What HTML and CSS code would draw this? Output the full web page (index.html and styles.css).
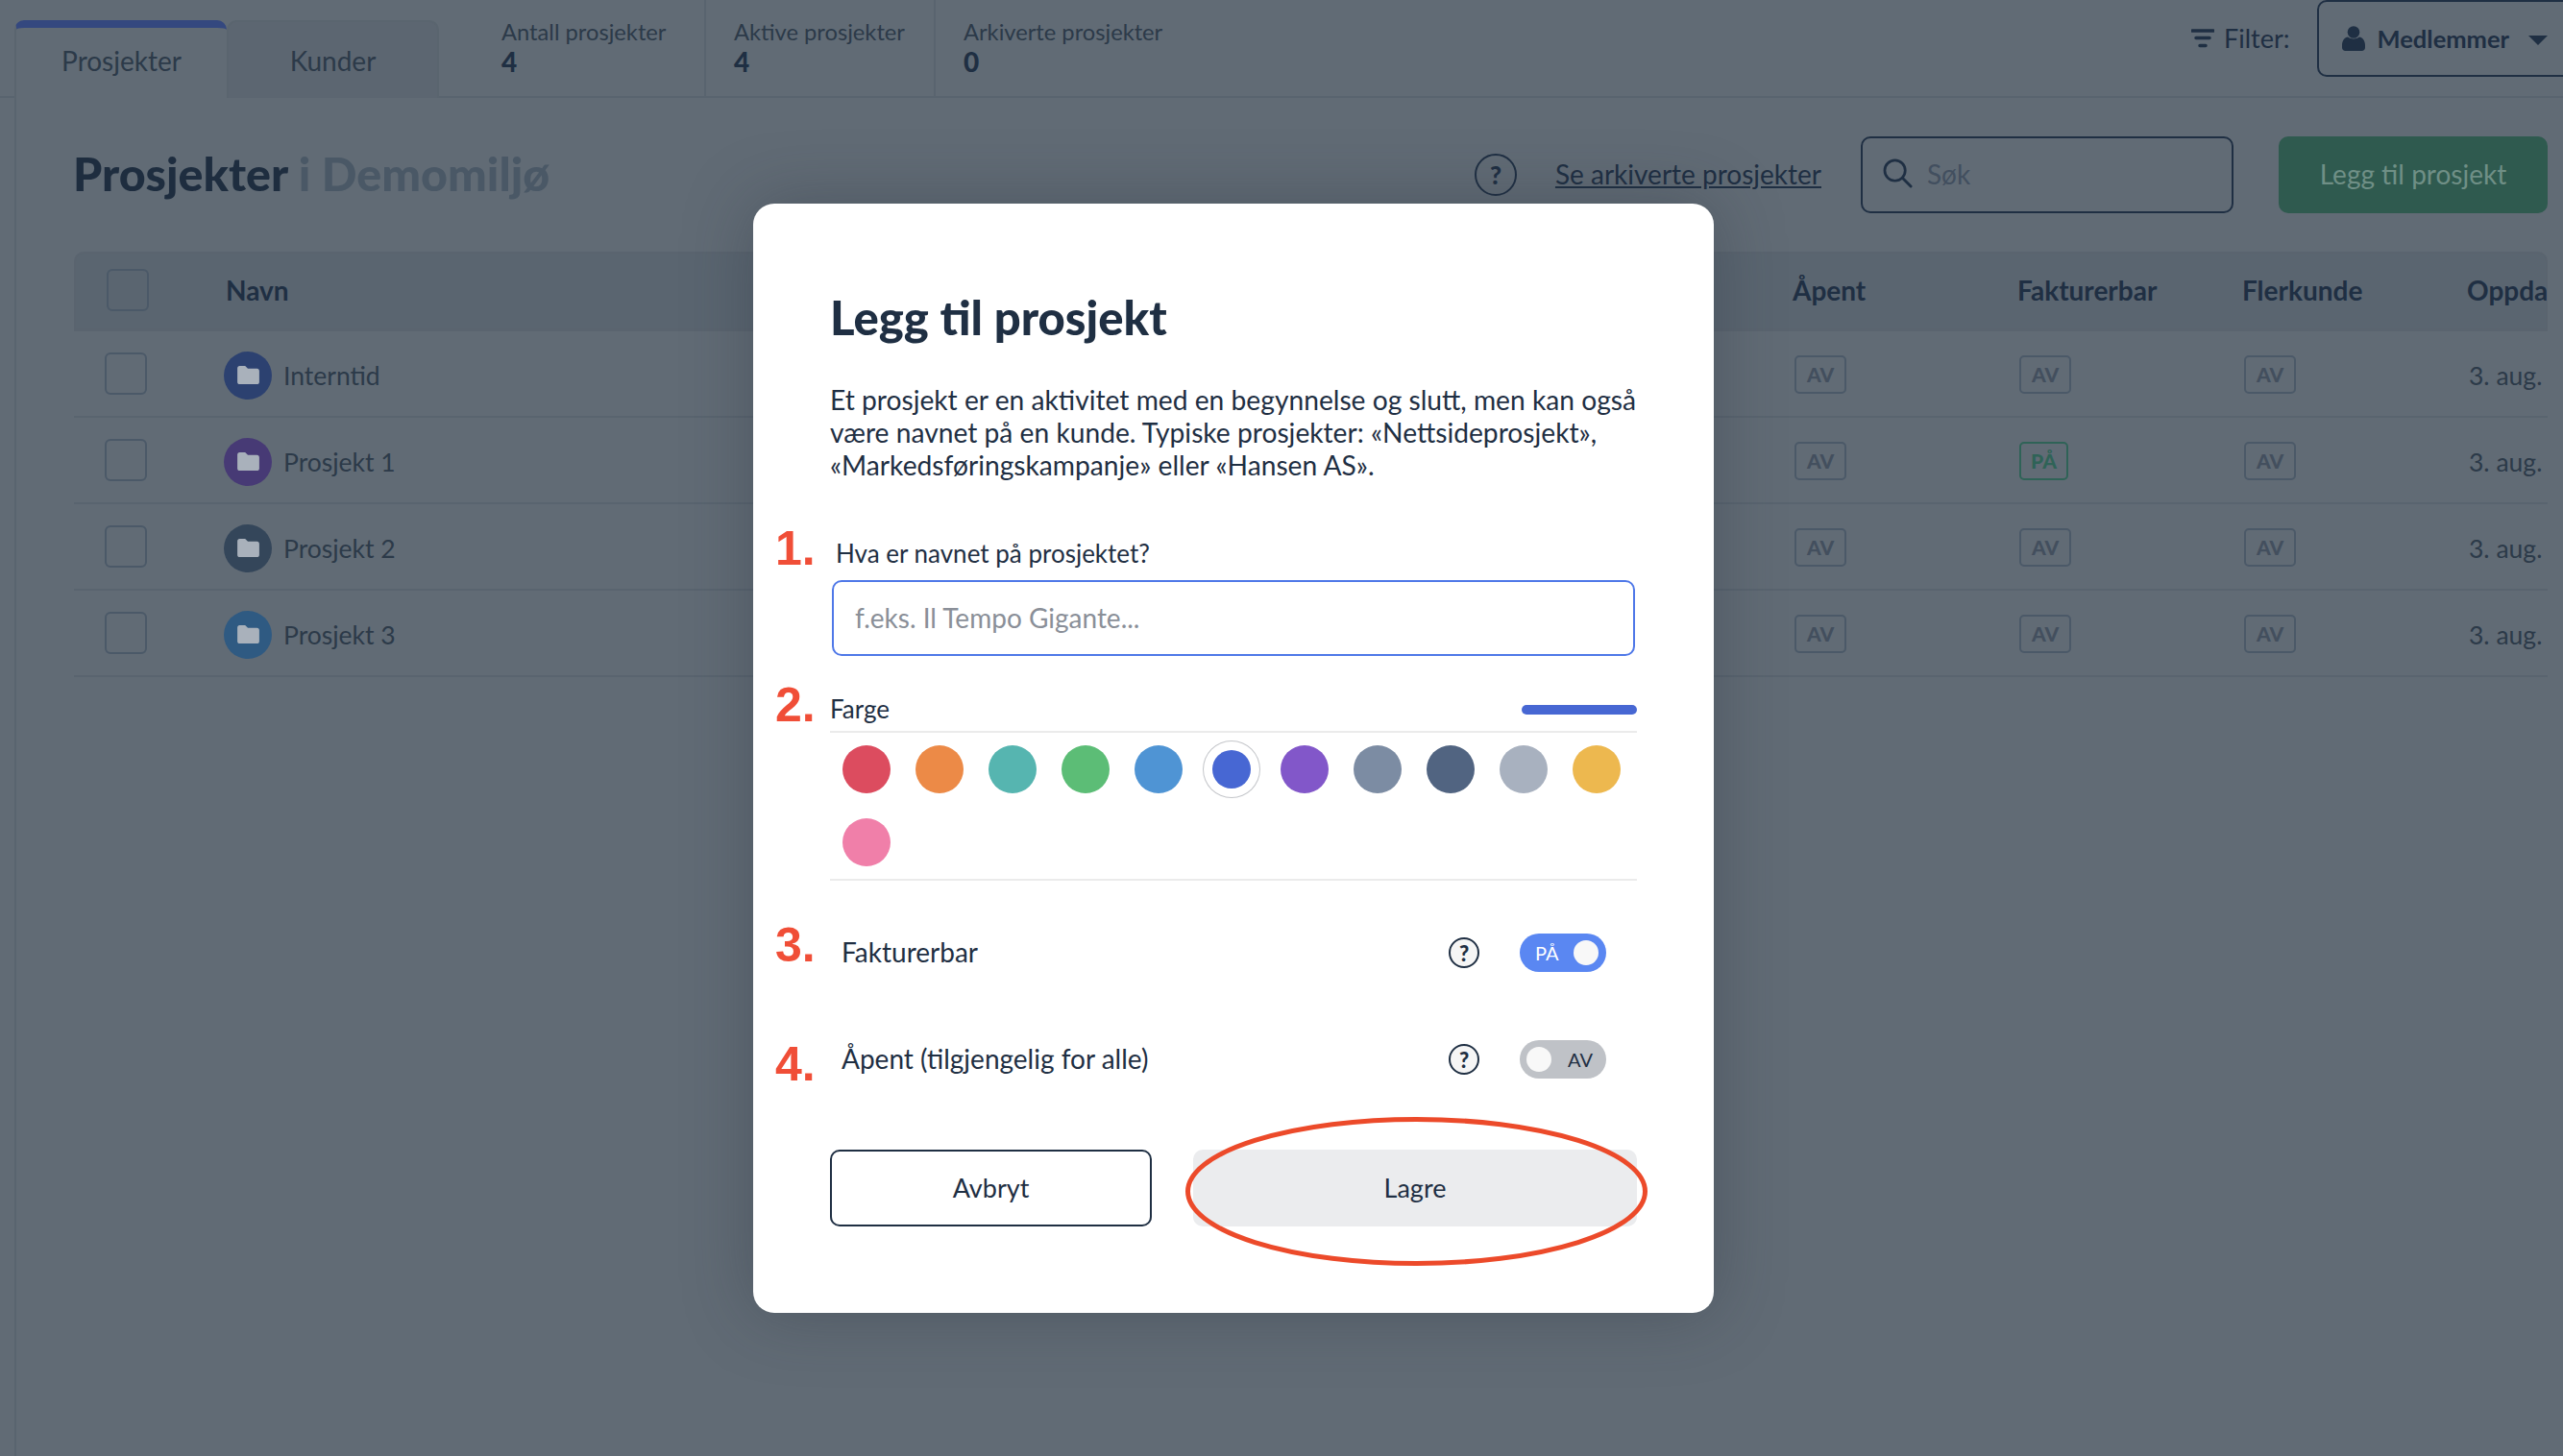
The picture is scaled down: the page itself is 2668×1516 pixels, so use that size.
FILE: index.html
```html
<!DOCTYPE html>
<html lang="no">
<head>
    <meta charset="UTF-8">
    <title>Prosjekter</title>
    <link rel="stylesheet" href="styles.css">
</head>
<body>
    <div class="page">
        <header class="topbar">
            <div class="tabs">
                <div class="tab tab-active">Prosjekter</div>
                <div class="tab">Kunder</div>
            </div>
            <div class="stats">
                <div class="stat"><span>Antall prosjekter</span><b>4</b></div>
                <div class="stat"><span>Aktive prosjekter</span><b>4</b></div>
                <div class="stat stat-last"><span>Arkiverte prosjekter</span><b>0</b></div>
            </div>
            <div class="filter">
                <svg class="filter-icon" viewBox="0 0 24 20"><path d="M1 2h22M5 9.500h14M9 17.500h6" stroke="#1f2f43" stroke-width="3.500" stroke-linecap="round" fill="none"/></svg>
                <span class="filter-label">Filter:</span>
                <div class="dropdown">
                    <svg class="person-icon" viewBox="0 0 24 26"><circle cx="12" cy="6.500" r="6.300" fill="#1f2f43"/><path d="M0 20c0-5 3-8 6-8.500 3 2.500 9 2.500 12 0 3 .5 6 3.500 6 8.500v2.500c0 2-1.500 3.500-3.500 3.500h-17C1.500 26 0 24.500 0 22.500z" fill="#1f2f43"/></svg>
                    <span>Medlemmer</span>
                    <i class="caret"></i>
                </div>
            </div>
        </header>

        <section class="content">
            <div class="head">
                <h1>Prosjekter <span>i Demomiljø</span></h1>
                <span class="help help-big">?</span>
                <a class="archive-link" href="#">Se arkiverte prosjekter</a>
                <div class="search">
                    <svg class="search-icon" viewBox="0 0 32 32"><circle cx="13" cy="13" r="11" stroke="#1f2f43" stroke-width="2.800" fill="none"/><path d="M21 21l9 9" stroke="#1f2f43" stroke-width="3" stroke-linecap="round"/></svg>
                    <span>Søk</span>
                </div>
                <button class="add-btn">Legg til prosjekt</button>
            </div>

            <div class="table">
                <div class="row row-head">
                    <div><i class="check check-head"></i></div>
                    <div>Navn</div>
                    <div>Åpent</div>
                    <div>Fakturerbar</div>
                    <div>Flerkunde</div>
                    <div class="clip">Oppdatert</div>
                </div>
                <div class="row">
                    <div><i class="check"></i></div>
                    <div class="name"><span class="avatar av-blue"><svg viewBox="0 0 24 20"><path d="M0 2.500C0 1 1 0 2.500 0h6l3 3h10C23 3 24 4 24 5.500v12c0 1.500-1 2.500-2.500 2.500h-19C1 20 0 19 0 17.500z"/></svg></span>Interntid</div>
                    <div><span class="badge">AV</span></div>
                    <div><span class="badge">AV</span></div>
                    <div><span class="badge">AV</span></div>
                    <div class="clip">3. aug. 2021</div>
                </div>
                <div class="row">
                    <div><i class="check"></i></div>
                    <div class="name"><span class="avatar av-purple"><svg viewBox="0 0 24 20"><path d="M0 2.500C0 1 1 0 2.500 0h6l3 3h10C23 3 24 4 24 5.500v12c0 1.500-1 2.500-2.500 2.500h-19C1 20 0 19 0 17.500z"/></svg></span>Prosjekt 1</div>
                    <div><span class="badge">AV</span></div>
                    <div><span class="badge badge-on">PÅ</span></div>
                    <div><span class="badge">AV</span></div>
                    <div class="clip">3. aug. 2021</div>
                </div>
                <div class="row">
                    <div><i class="check"></i></div>
                    <div class="name"><span class="avatar av-dark"><svg viewBox="0 0 24 20"><path d="M0 2.500C0 1 1 0 2.500 0h6l3 3h10C23 3 24 4 24 5.500v12c0 1.500-1 2.500-2.500 2.500h-19C1 20 0 19 0 17.500z"/></svg></span>Prosjekt 2</div>
                    <div><span class="badge">AV</span></div>
                    <div><span class="badge">AV</span></div>
                    <div><span class="badge">AV</span></div>
                    <div class="clip">3. aug. 2021</div>
                </div>
                <div class="row">
                    <div><i class="check"></i></div>
                    <div class="name"><span class="avatar av-sky"><svg viewBox="0 0 24 20"><path d="M0 2.500C0 1 1 0 2.500 0h6l3 3h10C23 3 24 4 24 5.500v12c0 1.500-1 2.500-2.500 2.500h-19C1 20 0 19 0 17.500z"/></svg></span>Prosjekt 3</div>
                    <div><span class="badge">AV</span></div>
                    <div><span class="badge">AV</span></div>
                    <div><span class="badge">AV</span></div>
                    <div class="clip">3. aug. 2021</div>
                </div>
            </div>
        </section>
    </div>

    <div class="modal">
        <h2>Legg til prosjekt</h2>
        <p class="intro">Et prosjekt er en aktivitet med en begynnelse og slutt, men kan også være navnet på en kunde. Typiske prosjekter: «Nettsideprosjekt», «Markedsføringskampanje» eller «Hansen AS».</p>

        <label class="name-label" for="projectName">Hva er navnet på prosjektet?</label>
        <input class="name-input" id="projectName" placeholder="f.eks. Il Tempo Gigante...">

        <div class="color-head">
            <span>Farge</span>
            <i class="color-bar"></i>
        </div>
        <div class="swatches">
            <i class="swatch c-red"></i>
            <i class="swatch c-orange"></i>
            <i class="swatch c-teal"></i>
            <i class="swatch c-green"></i>
            <i class="swatch c-blue"></i>
            <i class="swatch swatch-picked c-indigo"></i>
            <i class="swatch c-purple"></i>
            <i class="swatch c-slate"></i>
            <i class="swatch c-navy"></i>
            <i class="swatch c-grey"></i>
            <i class="swatch c-yellow"></i>
            <i class="swatch c-pink"></i>
        </div>

        <div class="option option-first">
            <span class="option-label">Fakturerbar</span>
            <span class="help">?</span>
            <span class="toggle toggle-on">PÅ<i></i></span>
        </div>
        <div class="option">
            <span class="option-label">Åpent (tilgjengelig for alle)</span>
            <span class="help">?</span>
            <span class="toggle toggle-off"><i></i>AV</span>
        </div>

        <div class="actions">
            <button class="btn-cancel">Avbryt</button>
            <button class="btn-save">Lagre</button>
        </div>

        <span class="step step-1">1.</span>
        <span class="step step-2">2.</span>
        <span class="step step-3">3.</span>
        <span class="step step-4">4.</span>
        <svg class="circle-mark" viewBox="0 0 481 155"><ellipse cx="240.500" cy="77.500" rx="238" ry="75" fill="none" stroke="#ec4a2a" stroke-width="5"/></svg>
    </div>
</body>
</html>
```

FILE: styles.css
```css
* {
    box-sizing: border-box;
}

html, body {
    margin: 0;
    height: 100%;
}

body {
    position: relative;
    overflow: hidden;
    background-color: #616b75;
    color: #1f2f43;
    font-family: Lato, "Noto Sans", sans-serif;
}

.page {
    width: 2668px;
    height: 1516px;
}

/* top bar */
.topbar {
    display: flex;
    height: 102px;
    padding-left: 15px;
    border-bottom: 2px solid #59646f;
}

.tabs {
    display: flex;
    align-items: flex-end;
    height: 102px;
}

.tab {
    display: flex;
    align-items: center;
    justify-content: center;
    width: 221px;
    height: 81px;
    border: 2px solid #5a656f;
    border-bottom: 0;
    border-radius: 10px 10px 0 0;
    background-color: #5c6671;
    color: #2c3a49;
    font-size: 28px;
}

.tab-active {
    height: 83px;
    margin-bottom: -2px;
    padding-bottom: 8px;
    border-top: 8px solid #34487f;
    border-right: 0;
    background-color: #616b75;
}

.stats {
    display: flex;
    height: 100px;
    margin-left: 65px;
}

.stat {
    display: flex;
    flex-direction: column;
    width: 239px;
    padding: 19px 0 0 29px;
    border-right: 2px solid #59646f;
    font-size: 23.700px;
    color: #2c3a49;
}

.stat:first-child {
    width: 213px;
    padding-left: 0;
}

.stat-last {
    border-right: 0;
}

.stat b {
    margin-top: 1px;
    font-size: 28px;
    font-weight: 900;
    line-height: 32px;
    color: #1f2f43;
}

.filter {
    display: flex;
    flex-shrink: 0;
    align-items: center;
    width: 387px;
    height: 80px;
    margin-left: auto;
}

.filter > * {
    flex-shrink: 0;
}

.filter-icon {
    width: 24px;
    height: 20px;
}

.filter-label {
    margin: 0 0 2px 10px;
    font-size: 27px;
}

.dropdown {
    display: flex;
    align-items: center;
    width: 280px;
    height: 80px;
    margin-left: 28px;
    padding-left: 24px;
    border: 2px solid #1f2f43;
    border-radius: 10px;
    font-size: 25.500px;
    font-weight: 700;
}

.person-icon {
    width: 24px;
    height: 26px;
    margin-right: 13px;
}

.caret {
    width: 0;
    height: 0;
    margin: 3px 0 0 20px;
    border-style: solid;
    border-width: 10px 10px 0;
    border-color: #1f2f43 transparent transparent;
}

/* page body */
.content {
    height: 1414px;
    margin-left: 15px;
    padding: 40px 16px 0 60px;
    border-left: 2px solid #59646f;
}

.head {
    display: flex;
    align-items: center;
    height: 80px;
}

h1 {
    margin: 0 auto 4px -1px;
    font-size: 48.400px;
    font-weight: 900;
    color: #1e2d3f;
}

h1 span {
    color: #4a5866;
}

.help {
    display: inline-flex;
    align-items: center;
    justify-content: center;
    width: 32px;
    height: 32px;
    border: 2px solid #1f2f43;
    border-radius: 50%;
    background-color: #f5f5f5;
    font-size: 22px;
    font-weight: 900;
}

.help-big {
    width: 44px;
    height: 44px;
    background-color: transparent;
    font-size: 26px;
}

.archive-link {
    margin: 0 41px 2px 40px;
    color: #1f2f43;
    font-size: 28px;
}

.search {
    display: flex;
    align-items: center;
    width: 388px;
    height: 80px;
    padding: 0 0 3px 21px;
    border: 2px solid #1f2f43;
    border-radius: 10px;
    color: #424f5f;
    font-size: 28px;
}

.search-icon {
    width: 31px;
    height: 31px;
    margin-right: 15px;
}

.add-btn {
    width: 280px;
    height: 80px;
    margin-left: 47px;
    padding-bottom: 3px;
    border: 0;
    border-radius: 10px;
    background-color: #2f5a4f;
    color: #6f8f86;
    font-family: inherit;
    font-size: 28px;
}

/* table */
.table {
    margin-top: 40px;
}

.row {
    display: grid;
    grid-template-columns: 156px 1635px 234px 234px 234px 83px;
    align-items: center;
    height: 90px;
    padding-top: 3px;
    border-bottom: 2px solid #59646f;
    color: #2c3a49;
    font-size: 26.500px;
}

.row-head {
    grid-template-columns: 156px 1631px 234px 234px 234px 83px;
    height: 83px;
    padding: 0 0 2px;
    border: 2px solid #5a646f;
    border-bottom-width: 3px;
    border-radius: 10px 10px 0 0;
    background-color: #5a6570;
    color: #1f2f43;
    font-size: 28px;
    font-weight: 700;
}

.check {
    display: block;
    width: 44px;
    height: 44px;
    margin: -3px 0 0 32px;
    border: 2px solid #4b5968;
    border-radius: 6px;
}

.check-head {
    margin: 0 0 0 32px;
}

.name {
    display: flex;
    align-items: center;
}

.avatar {
    display: flex;
    align-items: center;
    justify-content: center;
    width: 50px;
    height: 50px;
    margin-right: 12px;
    border-radius: 50%;
}

.avatar svg {
    width: 23px;
    height: 19px;
    fill: #a9b1bb;
}

.av-blue {
    background-color: #2c4170;
}

.av-purple {
    background-color: #473a75;
}

.av-dark {
    background-color: #34465a;
}

.av-sky {
    background-color: #2f5a82;
}

.badge {
    display: inline-flex;
    align-items: center;
    justify-content: center;
    width: 54px;
    height: 40px;
    margin-top: -2px;
    border: 2px solid #4b5968;
    border-radius: 5px;
    color: #434f5e;
    font-size: 21px;
    font-weight: 900;
    vertical-align: middle;
}

.badge-on {
    width: 51px;
    border-color: #2f6357;
    color: #2f6357;
}

.clip {
    overflow: hidden;
    white-space: nowrap;
}

/* modal */
.modal {
    position: absolute;
    top: 212px;
    left: 784px;
    width: 1000px;
    height: 1155px;
    padding: 92px 80px 0;
    border-radius: 22px;
    background-color: #fff;
    box-shadow: 0 0 70px rgba(40, 50, 60, 0.35);
    color: #1f2f43;
}

h2 {
    margin: 0;
    font-size: 49px;
    font-weight: 900;
    line-height: 52px;
}

.intro {
    margin: 43px 0 0;
    font-size: 28.200px;
    line-height: 34px;
}

.name-label {
    display: block;
    margin: 60px 0 0 6px;
    font-size: 26px;
    line-height: 30px;
}

.name-input {
    display: block;
    width: 836px;
    height: 79px;
    margin: 13px 0 0 2px;
    padding: 0 22px 2px;
    border: 2px solid #4f78e8;
    border-radius: 10px;
    font-family: inherit;
    font-size: 28px;
}

.name-input::placeholder {
    color: #8a8f98;
}

.color-head {
    display: flex;
    align-items: center;
    justify-content: space-between;
    margin-top: 41px;
    padding-bottom: 7px;
    border-bottom: 2px solid #ebebeb;
    font-size: 26px;
    line-height: 28px;
}

.color-head span {
    padding-bottom: 2px;
}

.color-bar {
    width: 120px;
    height: 10px;
    border-radius: 5px;
    background-color: #4767d3;
}

.swatches {
    display: grid;
    grid-template-columns: repeat(11, 76px);
    grid-auto-rows: 76px;
    place-items: center;
    border-bottom: 2px solid #ebebeb;
}

.swatch {
    width: 50px;
    height: 50px;
    border-radius: 50%;
}

.swatch-picked {
    width: 40px;
    height: 40px;
    box-shadow: 0 0 0 9px #fff, 0 0 0 10px #c4c6ca;
}

.c-red { background-color: #dc4c5f; }
.c-orange { background-color: #ec8a47; }
.c-teal { background-color: #56b5b0; }
.c-green { background-color: #5cbd76; }
.c-blue { background-color: #4f94d4; }
.c-indigo { background-color: #4767d3; }
.c-purple { background-color: #8257c9; }
.c-slate { background-color: #7c8ca3; }
.c-navy { background-color: #516481; }
.c-grey { background-color: #a8b1bf; }
.c-yellow { background-color: #edb84f; }
.c-pink { background-color: #f07fa9; }

.option {
    display: flex;
    align-items: center;
    height: 40px;
    margin-top: 71px;
    padding: 0 32px 0 12px;
    font-size: 28px;
}

.option-first {
    margin-top: 55px;
}

.option-label {
    margin: 0 auto 2px 0;
}

.toggle {
    display: flex;
    align-items: center;
    justify-content: space-between;
    width: 90px;
    height: 40px;
    margin-left: 42px;
    padding: 0 8px 0 16px;
    border-radius: 20px;
    font-size: 20px;
}

.toggle i {
    width: 26px;
    height: 26px;
    border-radius: 50%;
    background-color: #f8f8f8;
}

.toggle-on {
    background-color: #5a87f2;
    color: #fff;
}

.toggle-off {
    padding: 0 14px 0 7px;
    background-color: #bfc2c7;
}

.actions {
    display: grid;
    grid-template-columns: 335px 462px;
    column-gap: 43px;
    height: 80px;
    margin-top: 74px;
}

.actions button {
    padding-bottom: 2px;
    border-radius: 10px;
    color: #1f2f43;
    font-family: inherit;
    font-size: 27px;
}

.btn-cancel {
    border: 2px solid #1f2f43;
    background-color: #fff;
}

.btn-save {
    border: 0;
    background-color: #ebecee;
}

/* annotations drawn on top of the dialog */
.step {
    position: absolute;
    left: 23px;
    color: #f04e37;
    font-family: "Liberation Sans", Arial, sans-serif;
    font-size: 50px;
    font-weight: 700;
    line-height: 50px;
}

.step-1 { top: 334px; }
.step-2 { top: 497px; }
.step-3 { top: 747px; }
.step-4 { top: 871px; }

.circle-mark {
    position: absolute;
    top: 951px;
    left: 450px;
    width: 481px;
    height: 155px;
}
```
